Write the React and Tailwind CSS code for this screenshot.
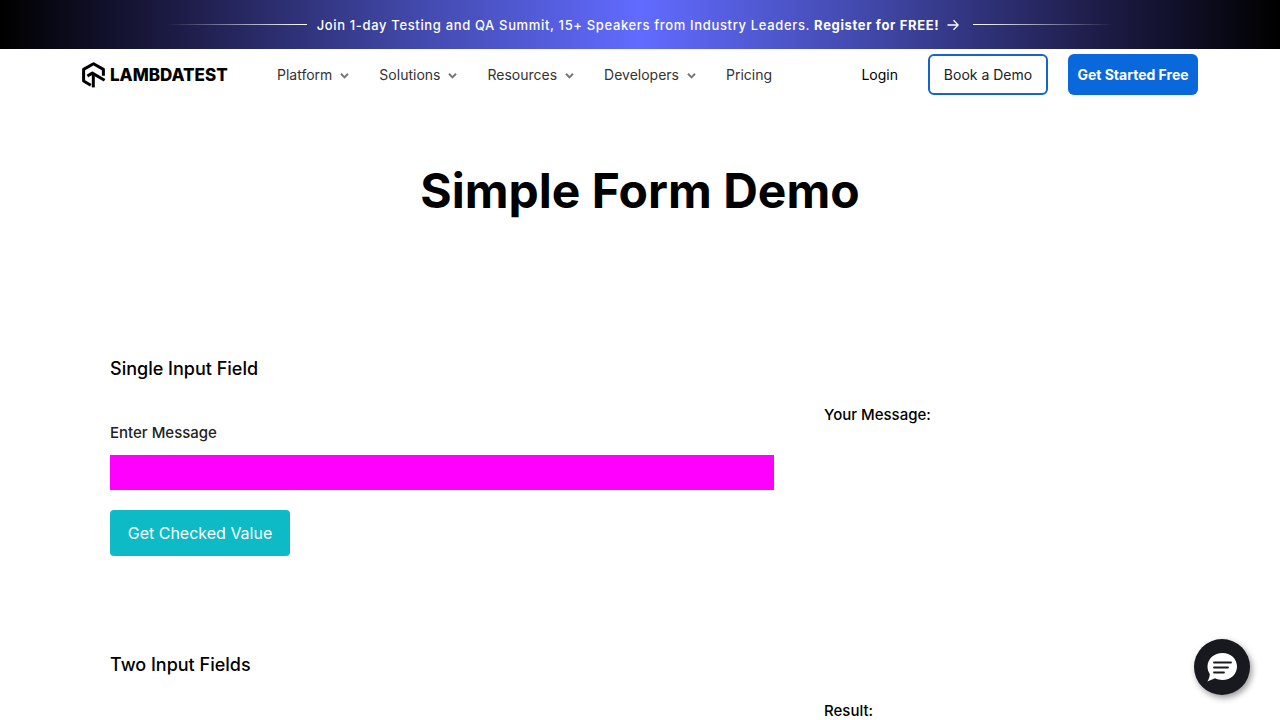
const menus = ["Platform", "Solutions", "Resources", "Developers"];

function Logo() {
  return (
    <a href="#home" aria-label="LambdaTest home" className="flex items-center gap-1">
      <svg viewBox="0 0 24 26" className="h-[26px] w-6" fill="none" stroke="black" strokeWidth="3">
        <path d="M8.8 23.2 1.6 19V7.4L11.500 1.700l9.900 5.700v6.400" strokeLinejoin="round" />
        <path d="M5.4 14 10.300 11.100 22.600 18.200" strokeLinejoin="round" />
        <path d="M11.300 12v13.400" />
      </svg>
      <span className="w-[119px] text-[17px] leading-5 font-extrabold text-black">LAMBDATEST</span>
    </a>
  );
}

function Chevron() {
  return (
    <svg viewBox="0 0 9 6" className="mt-0.5 h-1.5 w-[9px]" fill="none" stroke="#777" strokeWidth="2">
      <path d="M1 .8 4.500 4.400 8 .8" />
    </svg>
  );
}

function Banner() {
  return (
    <a
      href="#summit"
      className="flex h-[49px] items-center justify-center gap-2.5 bg-[linear-gradient(90deg,#000_0%,#1f1e4c_15%,#434aae_33%,#616bff_50%,#434aae_67%,#1f1e4c_85%,#000_100%)] text-[13px] leading-5 font-medium tracking-wider text-white"
    >
      <span className="h-px w-[140px] bg-linear-to-r from-transparent to-white" />
      <span className="flex items-center whitespace-nowrap">
        <span>
          Join 1-day Testing and QA Summit, 15+ Speakers from Industry Leaders. <b>Register for FREE!</b>
        </span>
        <svg viewBox="0 0 12 12" className="mr-1 ml-2 h-3 w-3" fill="none" stroke="white" strokeWidth="1.3">
          <path d="M.5 6h10.500M6.500 1.200 11.200 6l-4.700 4.800" />
        </svg>
      </span>
      <span className="h-px w-[140px] bg-linear-to-r from-white to-transparent" />
    </a>
  );
}

function Header() {
  return (
    <header className="flex items-center px-[82px] pt-[5px] text-sm text-[#333]">
      <Logo />
      <nav className="ml-12 flex items-center gap-[30px]">
        {menus.map((m) => (
          <button key={m} className="flex items-center gap-2">
            {m}
            <Chevron />
          </button>
        ))}
        <a href="#pricing">Pricing</a>
      </nav>
      <div className="ml-auto flex items-center">
        <a href="#login" className="mr-[30px] text-black">Login</a>
        <a href="#demo" className="mr-5 flex h-[41px] w-[120px] items-center justify-center rounded-md border-2 border-[#1565c8] text-[#222]">
          Book a Demo
        </a>
        <a href="#start" className="flex h-[41px] w-[130px] items-center justify-center rounded-md bg-[#0968dc] font-bold text-white">
          Get Started Free
        </a>
      </div>
    </header>
  );
}

export default function App() {
  return (
    <div className="bg-white font-[Inter,'Liberation_Sans',sans-serif] text-black">
      <Banner />
      <Header />
      <main>
        <h1 className="pt-[66px] text-center text-[48px] leading-[60px] font-bold">Simple Form Demo</h1>
        <section className="px-[110px] pt-[134px]">
          <h2 className="text-lg leading-7 font-medium">Single Input Field</h2>
          <div className="flex gap-[50px] pt-5">
            <form className="flex-[664] pt-5" onSubmit={(e) => e.preventDefault()}>
              <label htmlFor="message" className="block text-[15px] leading-5 font-medium text-[#222]">
                Enter Message
              </label>
              <input id="message" className="mt-3 block h-[35px] w-full bg-[#ff00ff] px-3 text-sm outline-none" />
              <button className="mt-5 block h-[46px] w-[180px] rounded bg-[#0ebac5] text-base text-white">
                Get Checked Value
              </button>
            </form>
            <p className="flex-[346] pt-0.5 text-[15px] leading-5 font-medium">Your Message:</p>
          </div>
        </section>
        <section className="px-[110px] pt-[95px]">
          <h2 className="text-lg leading-7 font-medium">Two Input Fields</h2>
          <div className="flex gap-[50px] pt-5">
            <div className="flex-[664]" />
            <p className="flex-[346] pt-0.5 text-[15px] leading-5 font-medium">Result:</p>
          </div>
        </section>
      </main>
      <button
        aria-label="Open chat"
        className="fixed right-[30px] bottom-[25px] flex h-14 w-14 items-center justify-center rounded-full bg-[#17191e] shadow-[2px_3px_6px_rgba(0,0,0,0.4)]"
      >
        <svg viewBox="0 0 32 30" className="h-[30px] w-8">
          <path
            d="M16.5 1C24.7 1 31 6.800 31 14.500S24.700 28 16.500 28c-3 0-5.300-.6-7.400-1.700L1.300 29.500C2.700 27.300 3.700 24.900 3.800 21.900 2.300 19.900 1.500 17.300 1.500 14.500 1.500 6.800 8.300 1 16.500 1Z"
            fill="white"
          />
          <path d="M8 10.500h17M8 15.500h14M8 20.500h10" stroke="#17191e" strokeWidth="1.8" strokeLinecap="round" />
        </svg>
      </button>
    </div>
  );
}
